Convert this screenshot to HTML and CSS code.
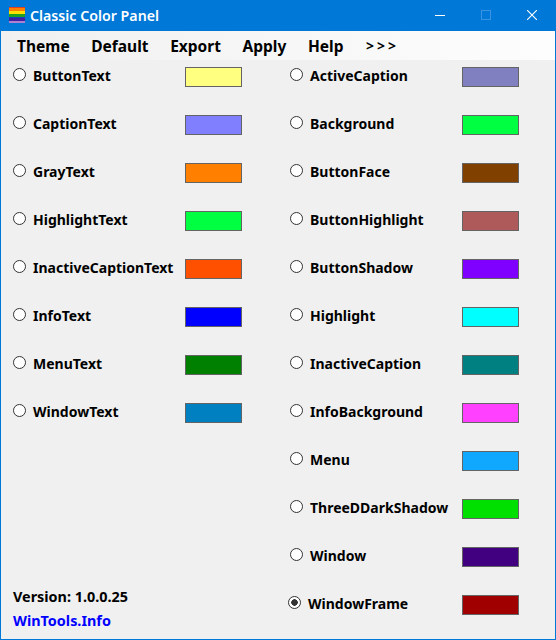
FILE: index.html
```html
<!DOCTYPE html>
<html lang="en">
<head>
<meta charset="utf-8">
<title>Classic Color Panel</title>
<link rel="stylesheet" href="styles.css">
</head>
<body>
<div class="window">
  <header class="titlebar">
    <svg class="app-icon" width="16" height="16" viewBox="0 0 16 16" shape-rendering="crispEdges">
      <rect x="0" y="0" width="16" height="1" fill="#e04020"/>
      <rect x="0" y="1" width="16" height="3" fill="#ff8000"/>
      <rect x="0" y="4" width="16" height="3" fill="#ffe000"/>
      <rect x="0" y="7" width="16" height="3" fill="#20a020"/>
      <rect x="0" y="10" width="16" height="1" fill="#1040c0"/>
      <rect x="0" y="11" width="16" height="3" fill="#4020a0"/>
      <rect x="0" y="14" width="16" height="2" fill="#b080d0"/>
    </svg>
    <span class="title">Classic Color Panel</span>
    <div class="controls">
      <svg class="ctl" width="10" height="10" viewBox="0 0 10 10" shape-rendering="crispEdges"><rect x="0" y="5" width="10" height="1" fill="#fff"/></svg>
      <svg class="ctl" width="10" height="10" viewBox="0 0 10 10" shape-rendering="crispEdges"><rect x="0.5" y="0.5" width="9" height="9" fill="none" stroke="#3a94e2"/></svg>
      <svg class="ctl" width="10" height="10" viewBox="0 0 10 10"><path d="M0 0L10 10M10 0L0 10" stroke="#fff" stroke-width="1.1"/></svg>
    </div>
  </header>
  <nav class="menu">
    <span>Theme</span><span>Default</span><span>Export</span><span>Apply</span><span>Help</span><span class="more">&gt;&gt;&gt;</span>
  </nav>
  <main class="panel">
    <section class="col left">
      <div class="row"><i class="radio"></i><span class="label">ButtonText</span><b class="swatch c-ffff80"></b></div>
      <div class="row"><i class="radio"></i><span class="label">CaptionText</span><b class="swatch c-8080ff"></b></div>
      <div class="row"><i class="radio"></i><span class="label">GrayText</span><b class="swatch c-ff8000"></b></div>
      <div class="row"><i class="radio"></i><span class="label">HighlightText</span><b class="swatch c-00ff40"></b></div>
      <div class="row"><i class="radio"></i><span class="label">InactiveCaptionText</span><b class="swatch c-ff5000"></b></div>
      <div class="row"><i class="radio"></i><span class="label">InfoText</span><b class="swatch c-0000ff"></b></div>
      <div class="row"><i class="radio"></i><span class="label">MenuText</span><b class="swatch c-008000"></b></div>
      <div class="row"><i class="radio"></i><span class="label">WindowText</span><b class="swatch c-0080c0"></b></div>
      <div class="about">
        <div class="version">Version: 1.0.0.25</div>
        <a class="link">WinTools.Info</a>
      </div>
    </section>
    <section class="col right">
      <div class="row"><i class="radio"></i><span class="label">ActiveCaption</span><b class="swatch c-8080c0"></b></div>
      <div class="row"><i class="radio"></i><span class="label">Background</span><b class="swatch c-00ff40"></b></div>
      <div class="row"><i class="radio"></i><span class="label">ButtonFace</span><b class="swatch c-804000"></b></div>
      <div class="row"><i class="radio"></i><span class="label">ButtonHighlight</span><b class="swatch c-ae5a5a"></b></div>
      <div class="row"><i class="radio"></i><span class="label">ButtonShadow</span><b class="swatch c-8000ff"></b></div>
      <div class="row"><i class="radio"></i><span class="label">Highlight</span><b class="swatch c-00ffff"></b></div>
      <div class="row"><i class="radio"></i><span class="label">InactiveCaption</span><b class="swatch c-008080"></b></div>
      <div class="row"><i class="radio"></i><span class="label">InfoBackground</span><b class="swatch c-ff40ff"></b></div>
      <div class="row"><i class="radio"></i><span class="label">Menu</span><b class="swatch c-10a8ff"></b></div>
      <div class="row"><i class="radio"></i><span class="label">ThreeDDarkShadow</span><b class="swatch c-00e000"></b></div>
      <div class="row"><i class="radio"></i><span class="label">Window</span><b class="swatch c-400080"></b></div>
      <div class="row selected"><i class="radio on"></i><span class="label">WindowFrame</span><b class="swatch c-a00000"></b></div>
    </section>
  </main>
</div>
</body>
</html>
```
FILE: styles.css
```css
* { box-sizing: border-box; }
html, body { margin: 0; height: 100%; }
body { font-family: "Noto Sans", "Open Sans", sans-serif; font-weight: 700; font-size: 14px; color: #000; }
.window { width: 556px; height: 640px; display: flex; flex-direction: column; border: 1px solid #0078d7; border-top: 0; background: #f0f0f0; }
.titlebar { height: 31px; flex: none; margin: 0 -1px; background: #0078d7; color: #fff; display: flex; align-items: center; padding: 0 1px 1px 9px; }
.app-icon { flex: none; }
.title { margin-left: 5px; font-size: 14.2px; font-weight: 600; }
.controls { margin-left: auto; display: flex; }
.ctl { width: 10px; height: 10px; margin: 0 18px; }
.menu { height: 29px; flex: none; display: flex; align-items: center; padding-left: 16px; gap: 21.6px; font-size: 15.5px; background: linear-gradient(to right, #f0f0f0, #fdfdfd); }
.more { font-size: 14px; margin-left: 1px; letter-spacing: 3px; }
.panel { flex: 1; display: flex; }
.col { display: flex; flex-direction: column; }
.left { width: 276px; padding-left: 12px; }
.right { padding-left: 13px; }
.row { height: 48px; flex: none; display: flex; align-items: flex-start; position: relative; padding-top: 6px; }
.radio { width: 13px; height: 13px; flex: none; margin-top: 2px; border: 1px solid #333; border-radius: 50%; background: #fff; }
.radio.on { background: radial-gradient(circle, #333 0 3px, #fff 3.5px); }
.selected { margin-left: -2px; }
.selected .label { width: 154px; }
.label { margin-left: 7px; width: 152px; line-height: 18px; margin-top: 1px; flex: none; white-space: nowrap; }
.swatch { width: 57px; height: 20px; flex: none; margin-top: 1px; border: 1px solid #646464; }
.about { margin-top: auto; padding-bottom: 9px; display: flex; flex-direction: column; gap: 5px; line-height: 19px; font-size: 14.4px; }
.link { color: #0000ff; }
.c-ffff80 { background: #ffff80; } .c-8080ff { background: #8080ff; } .c-ff8000 { background: #ff8000; }
.c-00ff40 { background: #00ff40; } .c-ff5000 { background: #ff5000; } .c-0000ff { background: #0000ff; }
.c-008000 { background: #008000; } .c-0080c0 { background: #0080c0; } .c-8080c0 { background: #8080c0; }
.c-804000 { background: #804000; } .c-ae5a5a { background: #ae5a5a; } .c-8000ff { background: #8000ff; }
.c-00ffff { background: #00ffff; } .c-008080 { background: #008080; } .c-ff40ff { background: #ff40ff; }
.c-10a8ff { background: #10a8ff; } .c-00e000 { background: #00e000; } .c-400080 { background: #400080; }
.c-a00000 { background: #a00000; }
```
